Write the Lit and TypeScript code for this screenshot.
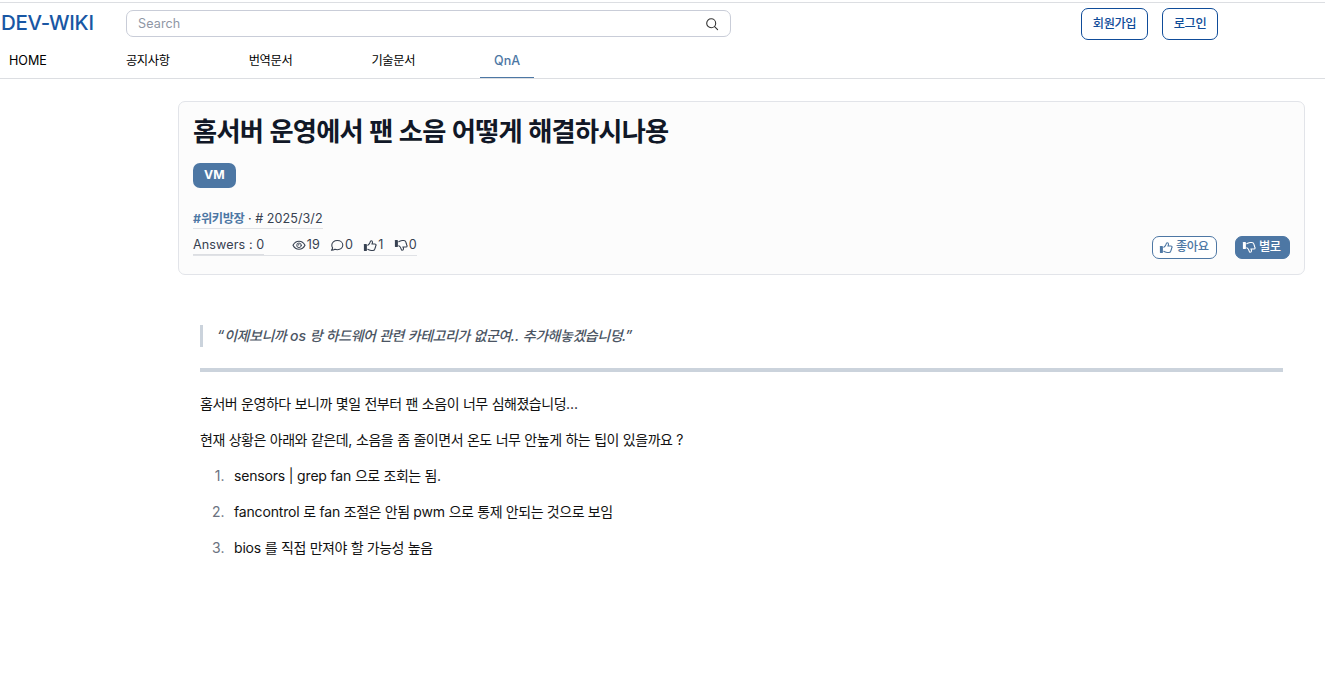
import { LitElement, html, css, svg } from "lit";
import { customElement } from "lit/decorators.js";

// Wraps Hangul runs so they can be tracked tighter than Latin text.
const t = (text: string) =>
  text
    .split(/([\uac00-\ud7a3]+)/)
    .filter((s) => s)
    .map((s) => (/[\uac00-\ud7a3]/.test(s) ? html`<span class="ko">${s}</span>` : s));

const icon = (body: unknown) => html`<svg class="ic" viewBox="0 0 14 14" fill="none" stroke="currentColor" stroke-width="1.1" stroke-linecap="round" stroke-linejoin="round">${body}</svg>`;
const eye = icon(svg`<path d="M1 7.300C2.300 4.800 4.400 3.300 7 3.300s4.700 1.500 6 4c-1.300 2.500-3.400 4-6 4S2.300 9.800 1 7.300z"/><circle cx="7" cy="7.300" r="2.300" stroke-width=".9"/><path d="M6 7.300a1 1 0 0 1 1-1" stroke-width=".9"/>`);
const chat = icon(svg`<path d="M7.300 2.500c3.200 0 5.500 2 5.500 4.600s-2.300 4.600-5.500 4.600c-.9 0-1.700-.1-2.400-.4-1 .7-2.100 1-3.500 1 .7-.7 1.100-1.500 1.200-2.400C2 9.200 1.800 8.200 1.800 7.100c0-2.600 2.300-4.600 5.500-4.600z"/>`);
const hand = svg`<rect x=".9" y="6" width="3" height="7" rx=".4" fill="currentColor" stroke="none"/><path d="M4.800 7.200c1.300-.7 2-1.700 2.300-3 .2-1 .5-1.500 1.100-1.500.9 0 1.300.7 1.300 1.500 0 .6-.2 1.200-.6 1.800h3c.8 0 1.200.5 1.200 1.100 0 .5-.3.900-.6 1.100.3.700 0 1.300-.4 1.600.1.700-.1 1.100-.6 1.400 0 .9-.6 1.300-1.600 1.300H8.300c-1.500 0-2.300-.7-3.500-1.200"/>`;
const up = icon(hand);
const down = icon(svg`<g transform="matrix(1 0 0 -1 0 15)">${hand}</g>`);

@customElement("app-root")
export class AppRoot extends LitElement {
  static styles = css`
    :host {
      display: block;
      height: 678px;
      overflow: hidden;
      box-sizing: border-box;
      padding-top: 2px;
      background: #fff;
      color: #111;
      font: 14px/22px Inter, "Noto Sans CJK KR", sans-serif;
    }
    * { box-sizing: border-box; margin: 0; }
    .ko { letter-spacing: -0.034em; }
    .ic { width: 14px; height: 14px; flex: none; display: block; }
    header { height: 77px; border-top: 1px solid #dcdee2; border-bottom: 1px solid #dcdee2; }
    .top { display: flex; height: 42px; padding: 5px 107px 0 1px; align-items: flex-start; }
    .logo { width: 125px; font: 500 20.500px/30px Inter, sans-serif; color: #1857a4; white-space: nowrap; letter-spacing: -0.3px; }
    .search { width: 605px; height: 27px; margin-top: 2px; border: 1px solid #c9cdd8; border-radius: 7px; padding: 0 11px; display: flex; align-items: center; justify-content: space-between; color: #8f97a5; font-size: 12.600px; letter-spacing: .1px; }
    .search .ic { color: #333; }
    .auth { margin-left: auto; display: flex; gap: 14px; }
    .auth button { height: 32px; border: 1px solid #0f4c99; border-radius: 7px; background: #fff; color: #0f4c99; padding: 0; font: 500 12.250px/18px Inter, "Noto Sans CJK KR", sans-serif; }
    .join { width: 67px; }
    .login { width: 56px; }
    nav { display: flex; height: 33px; gap: 51px; font-size: 12.250px; line-height: 31px; color: #000; }
    nav a { padding: 0 14px; height: 33px; }
    nav .ko { letter-spacing: -0.028em; }
    nav a:first-child { padding-left: 9px; font-size: 12.600px; }
    nav a.on { color: #4d77a4; border-bottom: 1px solid #4d77a4; font-size: 12.500px; font-weight: 500; }
    .card { margin: 22px 20px 0 178px; height: 174px; border: 1px solid #e2e4e9; border-radius: 7px; background: #fcfcfc; padding: 14px 14px 0; display: flex; flex-direction: column; align-items: flex-start; color: #374151; }
    h1 { font-size: 26.250px; line-height: 32px; font-weight: 700; color: #111827; white-space: nowrap; }
    h1 .ko { letter-spacing: -0.029em; }
    .tag { margin-top: 15px; height: 25px; padding: 0 11px; border-radius: 7px; background: #4d77a4; color: #fff; font-size: 12.250px; font-weight: 700; line-height: 24px; }
    .meta { margin-top: 20px; height: 21px; line-height: 21px; font-size: 12.600px; border-bottom: 1px solid #e0e2e6; white-space: nowrap; letter-spacing: .04px; }
    .meta b { color: #4d77a4; font-size: 12.250px; }
    .row { align-self: stretch; display: flex; justify-content: space-between; margin-top: 7px; }
    .stats { display: flex; height: 20px; font-size: 12.600px; line-height: 18px; border-bottom: 1px solid #e0e2e6; }
    .ans { height: 19px; width: 71px; border-bottom: 1px solid #dcdee2; margin-right: 28px; letter-spacing: .1px; white-space: nowrap; }
    .st { display: flex; align-items: center; height: 18px; margin-right: 10.500px; gap: .8px; }
    .st:last-child { margin-right: 0; }
    .votes { display: flex; gap: 18px; }
    .votes button { height: 23px; border: 1px solid #4d77a4; border-radius: 7px; background: #fff; color: #4d77a4; display: flex; align-items: center; padding: 0 7px 1px 6px; gap: 3px; font: 500 12.250px/18px Inter, "Noto Sans CJK KR", sans-serif; white-space: nowrap; }
    .votes button .label { padding-bottom: 1px; }
    .like { width: 65px; }
    .votes .hate { width: 55px; background: #4d77a4; color: #fff; }
    article { margin: 50px 42px 0 200px; }
    blockquote { border-left: 3px solid #cbd3dc; padding-left: 14px; height: 22px; font-weight: 500; font-style: italic; color: #4b5563; white-space: nowrap; }
    hr { border: 0; height: 4px; background: #cbd3dc; margin: 21px 0; }
    p { margin-bottom: 14px; white-space: nowrap; letter-spacing: -0.050px; }
    ol { list-style: none; padding: 0 0 0 10px; display: flex; flex-direction: column; gap: 14px; letter-spacing: -0.170px; }
    li { display: flex; white-space: nowrap; }
    .n { width: 24px; padding-right: 9.500px; text-align: right; color: #6b7280; letter-spacing: 0; }
  `;

  render() {
    return html`
      <header>
        <div class="top">
          <div class="logo">DEV-WIKI</div>
          <div class="search"><span>Search</span>${icon(svg`<circle cx="6.200" cy="6.200" r="4.500"/><path d="M9.600 9.600l3 3"/>`)}</div>
          <div class="auth"><button class="join">${t("회원가입")}</button><button class="login">${t("로그인")}</button></div>
        </div>
        <nav>${["HOME", "공지사항", "번역문서", "기술문서", "QnA"].map((n) => html`<a class=${n === "QnA" ? "on" : ""}>${t(n)}</a>`)}</nav>
      </header>
      <section class="card">
        <h1>${t("홈서버 운영에서 팬 소음 어떻게 해결하시나용")}</h1>
        <span class="tag">VM</span>
        <div class="meta"><b>${t("#위키방장")}</b> · # 2025/3/2</div>
        <div class="row">
          <div class="stats">
            <span class="ans">Answers : 0</span>
            <span class="st">${eye}<span>19</span></span><span class="st">${chat}<span>0</span></span><span class="st">${up}<span>1</span></span><span class="st">${down}<span>0</span></span>
          </div>
          <div class="votes">
            <button class="like">${up}<span class="label">${t("좋아요")}</span></button>
            <button class="hate">${down}<span class="label">${t("별로")}</span></button>
          </div>
        </div>
      </section>
      <article>
        <blockquote>${t("“이제보니까 os 랑 하드웨어 관련 카테고리가 없군여.. 추가해놓겠습니덩.”")}</blockquote>
        <hr />
        <p>${t("홈서버 운영하다 보니까 몇일 전부터 팬 소음이 너무 심해졌습니덩...")}</p>
        <p>${t("현재 상황은 아래와 같은데, 소음을 좀 줄이면서 온도 너무 안높게 하는 팁이 있을까요 ?")}</p>
        <ol>
          ${["sensors | grep fan 으로 조회는 됨.", "fancontrol 로 fan 조절은 안됨 pwm 으로 통제 안되는 것으로 보임", "bios 를 직접 만져야 할 가능성 높음"].map(
            (s, i) => html`<li><span class="n">${i + 1}.</span><span>${t(s)}</span></li>`
          )}
        </ol>
      </article>
    `;
  }
}
